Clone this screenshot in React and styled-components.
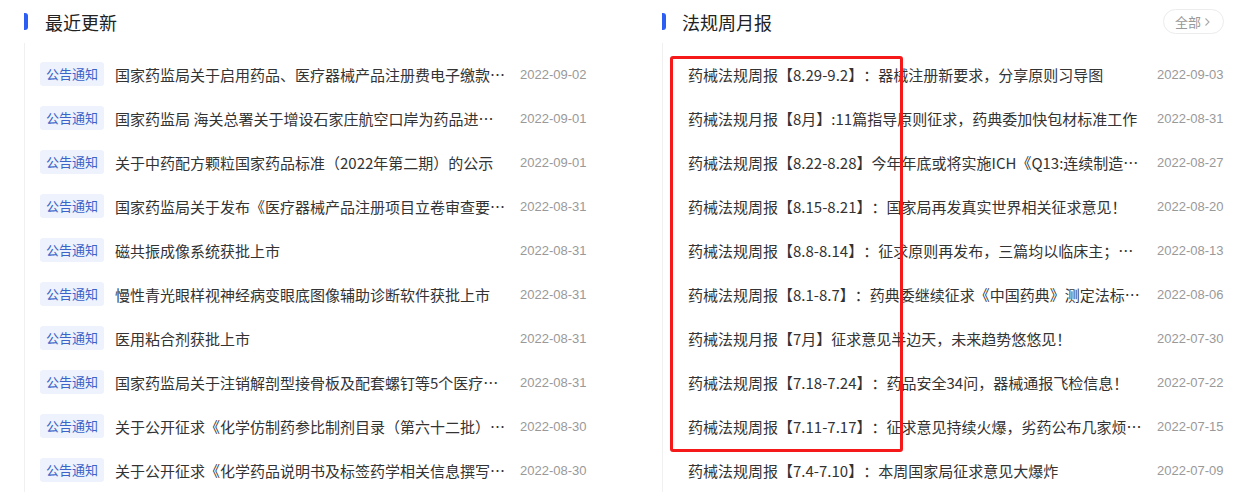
import React from 'react'
import styled, { createGlobalStyle } from 'styled-components'

const GlobalStyle = createGlobalStyle`
body {
  margin: 0;
  background: #fff;
  font-family: "Liberation Sans", "Noto Sans CJK SC", sans-serif;
  text-spacing-trim: space-all;
}
`

const Page = styled.div`
display: flex;
padding-left: 24px;
width: 1251px;
height: 500px;
box-sizing: border-box;
`

const Column = styled.div`
width: ${props => props.width}px;
margin-left: ${props => props.offset || 0}px;
flex-shrink: 0;
`

const Header = styled.div`
height: 43px;
display: flex;
align-items: center;
justify-content: space-between;
`

const HeadTitle = styled.h3`
margin: 0;
display: flex;
align-items: center;
font-family: "Noto Sans CJK SC", sans-serif;
font-size: 18px;
font-weight: 400;
color: #222;
height: 17px;

&::before {
  content: "";
  width: 4px;
  height: 17px;
  margin-right: ${props => props.gap}px;
  background: #2d5ef4;
  border-radius: 0 3px 3px 0;
}
`

const MoreButton = styled.a`
display: flex;
align-items: center;
gap: 3px;
height: 25px;
padding: 0 12px 0 11px;
box-sizing: border-box;
border: 1px solid #ececec;
border-radius: 13px;
font-family: "Noto Sans CJK SC", sans-serif;
font-size: 13px;
color: #999;
cursor: pointer;
`

const List = styled.ul`
position: relative;
margin: 0;
padding: 9px 0 0 ${props => props.indent}px;
list-style: none;
border-left: 1px solid #f0f0f0;
`

const Row = styled.li`
height: 44px;
display: flex;
align-items: center;
`

const Tag = styled.span`
flex-shrink: 0;
height: 24px;
line-height: 24px;
padding: 0 6px;
margin-right: 11px;
border-radius: 3px;
background: #eef2fd;
color: #3b63c8;
font-family: "Noto Sans CJK SC", sans-serif;
font-size: 13px;
`

const Title = styled.span`
width: ${props => props.width}px;
flex-shrink: 0;
white-space: nowrap;
overflow: hidden;
text-overflow: ellipsis;
font-family: "Noto Sans CJK SC", sans-serif;
font-size: 15px;
color: #333;
`

const Date = styled.span`
margin-left: ${props => props.gap}px;
font-family: "Liberation Sans", sans-serif;
font-size: 13px;
color: #999;
white-space: nowrap;
`

// red annotation frame drawn over the list
const Highlight = styled.div`
position: absolute;
left: 7px;
top: 13px;
width: 233px;
height: 396px;
box-sizing: border-box;
border: 3px solid #f5191a;
border-radius: 3px;
pointer-events: none;
`

const updates = [
  ['国家药监局关于启用药品、医疗器械产品注册费电子缴款票据的公告', '2022-09-02'],
  ['国家药监局 海关总署关于增设石家庄航空口岸为药品进口口岸的公告', '2022-09-01'],
  ['关于中药配方颗粒国家药品标准（2022年第二期）的公示', '2022-09-01'],
  ['国家药监局关于发布《医疗器械产品注册项目立卷审查要求（试行）》的通告', '2022-08-31'],
  ['磁共振成像系统获批上市', '2022-08-31'],
  ['慢性青光眼样视神经病变眼底图像辅助诊断软件获批上市', '2022-08-31'],
  ['医用粘合剂获批上市', '2022-08-31'],
  ['国家药监局关于注销解剖型接骨板及配套螺钉等5个医疗器械注册证书的公告', '2022-08-31'],
  ['关于公开征求《化学仿制药参比制剂目录（第六十二批）》意见的通知', '2022-08-30'],
  ['关于公开征求《化学药品说明书及标签药学相关信息撰写指导原则》意见的通知', '2022-08-30'],
]

const reports = [
  ['药械法规周报【8.29-9.2】：器械注册新要求，分享原则习导图', '2022-09-03'],
  ['药械法规月报【8月】:11篇指导原则征求，药典委加快包材标准工作', '2022-08-31'],
  ['药械法规周报【8.22-8.28】今年年底或将实施ICH《Q13:连续制造》指导原则', '2022-08-27'],
  ['药械法规周报【8.15-8.21】：国家局再发真实世界相关征求意见！', '2022-08-20'],
  ['药械法规周报【8.8-8.14】：征求原则再发布，三篇均以临床主；附件下载', '2022-08-13'],
  ['药械法规周报【8.1-8.7】：药典委继续征求《中国药典》测定法标准草案', '2022-08-06'],
  ['药械法规月报【7月】征求意见半边天，未来趋势悠悠见！', '2022-07-30'],
  ['药械法规周报【7.18-7.24】：药品安全34问，器械通报飞检信息！', '2022-07-22'],
  ['药械法规周报【7.11-7.17】：征求意见持续火爆，劣药公布几家烦恼几家愁', '2022-07-15'],
  ['药械法规周报【7.4-7.10】：本周国家局征求意见大爆炸', '2022-07-09'],
]

const Chevron = () => (
  <svg width="7" height="10" viewBox="0 0 7 10" fill="none">
    <path d="M1.5 1.5 L5 5 L1.5 8.5" stroke="#aaa" strokeWidth="1.1" />
  </svg>
)

export default function App() {
  return (
    <Page>
      <GlobalStyle />
      <Column width={614}>
        <Header>
          <HeadTitle gap={17}>最近更新</HeadTitle>
        </Header>
        <List indent={15}>
          {updates.map(([title, date]) => (
            <Row key={title}>
              <Tag>公告通知</Tag>
              <Title width={392}>{title}</Title>
              <Date gap={13}>{date}</Date>
            </Row>
          ))}
        </List>
      </Column>
      <Column width={562} offset={24}>
        <Header>
          <HeadTitle gap={16}>法规周月报</HeadTitle>
          <MoreButton>全部 <Chevron /></MoreButton>
        </Header>
        <List indent={25}>
          {reports.map(([title, date]) => (
            <Row key={title}>
              <Title width={454}>{title}</Title>
              <Date gap={15}>{date}</Date>
            </Row>
          ))}
          <Highlight />
        </List>
      </Column>
    </Page>
  )
}
